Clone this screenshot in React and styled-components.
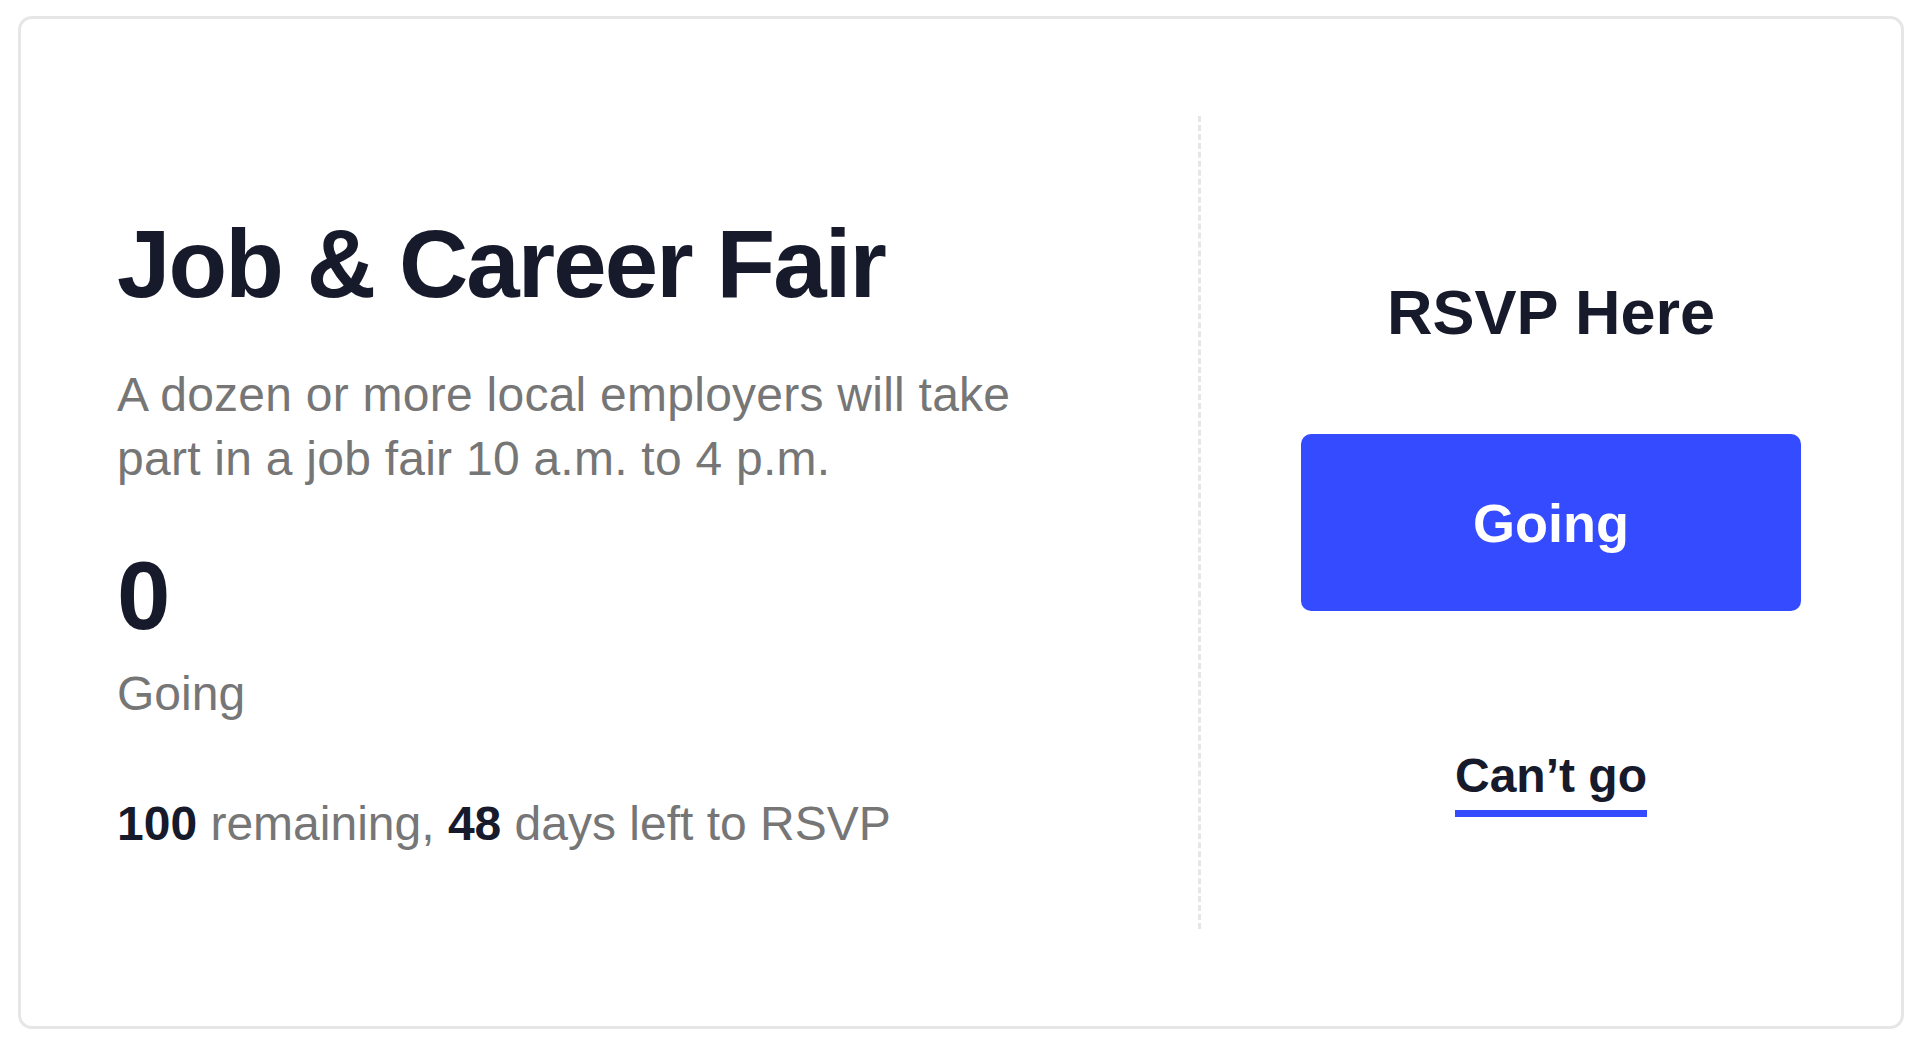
import React from "react";
import styled, { createGlobalStyle } from "styled-components";

const GlobalStyle = createGlobalStyle`
  html, body { margin: 0; padding: 0; background: #fff; }
  body {
    font-family: "Liberation Sans", Arial, Helvetica, sans-serif;
    color: #161a2b;
  }
  * { box-sizing: border-box; }
`;

const Page = styled.div`
  padding: 16px 14px 15px 18px;
`;

const Card = styled.section`
  height: 1013px;
  border: 3px solid #e6e6e6;
  border-radius: 14px;
  padding: 97px 0;
  display: flex;
`;

const Info = styled.div`
  flex: 1;
  padding: 100px 0 0 96px;
  display: flex;
  flex-direction: column;
`;

const Title = styled.h1`
  margin: 0;
  font-size: 96px;
  line-height: 96px;
  font-weight: 700;
  letter-spacing: -1.9px;
  color: #161a2b;
`;

const Description = styled.p`
  margin: 51px 0 0;
  max-width: 930px;
  font-size: 48px;
  line-height: 64px;
  letter-spacing: 0.25px;
  color: #767676;
`;

const Count = styled.div`
  margin-top: 57px;
  font-size: 96px;
  line-height: 96px;
  font-weight: 700;
  color: #161a2b;
`;

const Label = styled.div`
  margin-top: ${(p) => p.$gap || 0}px;
  font-size: 48px;
  line-height: 64px;
  color: #767676;

  b {
    font-weight: 700;
    color: #161a2b;
  }
`;

const Rsvp = styled.div`
  width: 703px;
  border-left: 3px dashed #e6e6e6;
  padding: 165px 100px 0;
  display: flex;
  flex-direction: column;
  align-items: center;
`;

const RsvpTitle = styled.h2`
  margin: 0;
  font-size: 63px;
  line-height: 63px;
  font-weight: 700;
  color: #161a2b;
`;

const GoingButton = styled.button`
  margin-top: 90px;
  width: 100%;
  height: 177px;
  border: none;
  border-radius: 10px;
  background: #354bff;
  color: #fff;
  font-family: inherit;
  font-size: 54px;
  font-weight: 700;
  cursor: pointer;
`;

const CantGo = styled.a`
  margin-top: 141px;
  display: inline-block;
  font-size: 48px;
  line-height: 48px;
  font-weight: 700;
  color: #161a2b;
  text-decoration: none;
  padding-bottom: 10px;
  border-bottom: 7px solid #354bff;
  cursor: pointer;
`;

export default function App() {
  return (
    <Page>
      <GlobalStyle />
      <Card>
        <Info>
          <Title>Job &amp; Career Fair</Title>
          <Description>
            A dozen or more local employers will take part in a job fair 10
            a.m. to 4 p.m.
          </Description>
          <Count>0</Count>
          <Label $gap={18}>Going</Label>
          <Label $gap={66}>
            <b>100</b> remaining, <b>48</b> days left to RSVP
          </Label>
        </Info>
        <Rsvp>
          <RsvpTitle>RSVP Here</RsvpTitle>
          <GoingButton type="button">Going</GoingButton>
          <CantGo>Can’t go</CantGo>
        </Rsvp>
      </Card>
    </Page>
  );
}
